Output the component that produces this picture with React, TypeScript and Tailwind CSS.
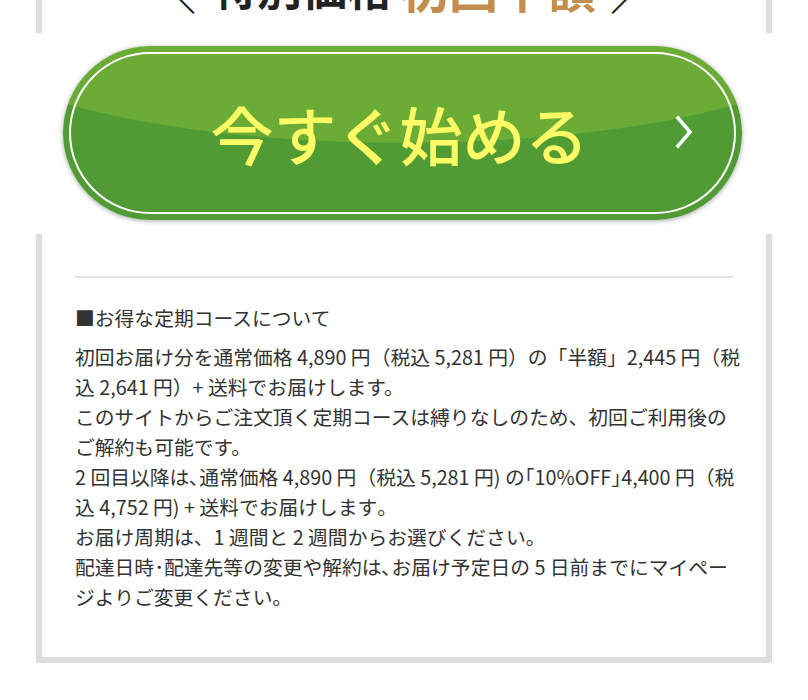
import React from "react";

const font = { fontFamily: '"Noto Sans CJK JP", "Noto Sans", sans-serif' };

function StartButton() {
  return (
    <div className="w-[679px] h-[174px] rounded-full p-[6px] bg-[radial-gradient(450px_116px_at_50%_-19px,#6bac36_99.5%,#509b34_100%)] shadow-[0_1px_5px_rgba(0,0,0,0.35)]">
      <div className="h-full rounded-full border-2 border-white flex items-center justify-center relative">
        <span className="text-[63px] leading-none font-medium text-[#fefc66] mt-[-1px] ml-[-6px]">
          今すぐ始める
        </span>
        {/* chevron */}
        <svg
          className="absolute right-[40px] top-1/2 -translate-y-1/2 mt-[-1px]"
          width="20"
          height="34"
          viewBox="0 0 20 34"
          fill="none"
        >
          <polyline points="4,3 16,17 4,31" stroke="#fff" strokeWidth="3.6" strokeLinecap="square" />
        </svg>
      </div>
    </div>
  );
}

export default function App() {
  return (
    <div className="w-[808px] h-[700px] bg-white overflow-hidden" style={font}>
      {/* top of the offer box, heading cut off by the viewport */}
      <div className="mx-[36px] h-[33px] border-x-[6px] border-[#dddddd] overflow-hidden flex justify-center">
        <div className="mt-[-37px] ml-[-2px] h-[48px] whitespace-nowrap leading-[48px] font-bold text-[#222] flex items-end">
          <span className="text-[46px] leading-[44px] font-normal">＼</span>
          <span className="text-[45px] ml-[16px]">特別価格</span>
          <span className="text-[49px] text-[#c38d4d] ml-[8px]">初回半額</span>
          <span className="text-[46px] leading-[44px] font-normal ml-[14px]">／</span>
        </div>
      </div>

      {/* CTA button */}
      <div className="h-[201px] pt-[13px] pl-[63px]">
        <StartButton />
      </div>

      {/* lower part of the box */}
      <div className="mx-[36px] h-[429px] border-x-[6px] border-b-[6px] border-[#dddddd] pl-[33px] pr-[25px] pt-[42px] text-[#333] text-[19.8px] leading-[30px]">
        <hr className="border-0 h-[2px] bg-[#e2e2e2] mr-[8px]" />
        <p className="mt-[25px]">■お得な定期コースについて</p>
        <p className="mt-[9px]">
          初回お届け分を通常価格 4,890 円（税込 5,281 円）の「半額」2,445 円（税込 2,641 円）+ 送料でお届けします。
          <br />
          このサイトからご注文頂く定期コースは縛りなしのため、初回ご利用後のご解約も可能です。
          <br />
          2 回目以降は､通常価格 4,890 円（税込 5,281 円) の｢10%OFF｣4,400 円（税込 4,752 円) + 送料でお届けします｡
          <br />
          お届け周期は、1 週間と 2 週間からお選びください。
          <br />
          配達日時･配達先等の変更や解約は､お届け予定日の 5 日前までにマイページよりご変更ください｡
        </p>
      </div>
    </div>
  );
}
